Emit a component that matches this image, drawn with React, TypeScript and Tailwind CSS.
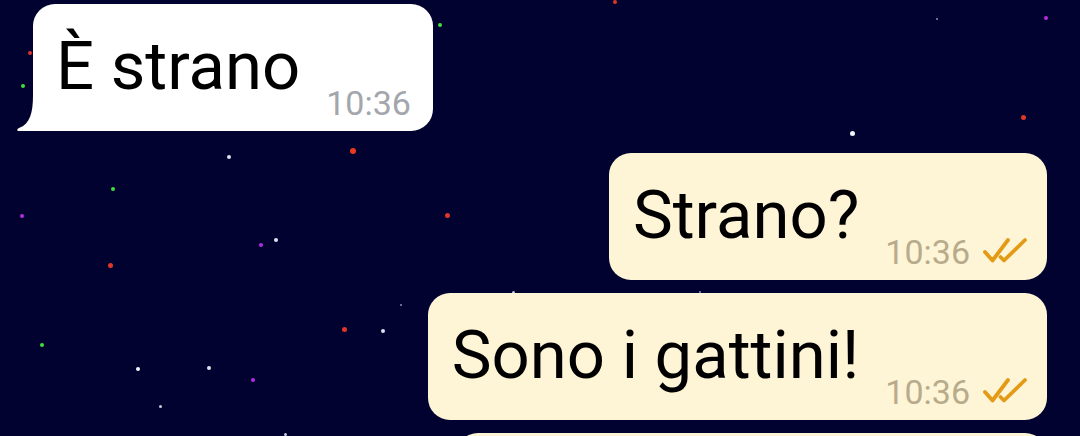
type Star = { x: number; y: number; c: string; s: number }

const stars: Star[] = [
  { x: 30, y: 53, c: "#e0362a", s: 4 },
  { x: 23, y: 86, c: "#3fe03a", s: 4 },
  { x: 440, y: 25, c: "#3fe03a", s: 4 },
  { x: 615, y: 2, c: "#e0362a", s: 4 },
  { x: 1046, y: 18, c: "#b02ee0", s: 4 },
  { x: 937, y: 19, c: "#8a8fb8", s: 2 },
  { x: 1023, y: 117, c: "#e0362a", s: 5 },
  { x: 852, y: 133, c: "#f2f6fa", s: 5 },
  { x: 229, y: 157, c: "#d8e6ee", s: 4 },
  { x: 353, y: 151, c: "#ea3a20", s: 6 },
  { x: 113, y: 189, c: "#3fe03a", s: 4 },
  { x: 22, y: 216, c: "#b02ee0", s: 4 },
  { x: 261, y: 245, c: "#b02ee0", s: 4 },
  { x: 276, y: 240, c: "#d8e2f0", s: 4 },
  { x: 110, y: 265, c: "#e0362a", s: 5 },
  { x: 447, y: 215, c: "#e0362a", s: 5 },
  { x: 344, y: 329, c: "#e0362a", s: 5 },
  { x: 383, y: 331, c: "#d8e2f0", s: 4 },
  { x: 42, y: 345, c: "#3fe03a", s: 4 },
  { x: 138, y: 369, c: "#f2f6fa", s: 4 },
  { x: 209, y: 368, c: "#d8e6ee", s: 4 },
  { x: 253, y: 380, c: "#b02ee0", s: 4 },
  { x: 160, y: 406, c: "#c8cce0", s: 3 },
  { x: 401, y: 305, c: "#8a8fb8", s: 2 },
  { x: 513, y: 292, c: "#c8cce0", s: 3 },
  { x: 700, y: 292, c: "#8a8fb8", s: 2 },
  { x: 285, y: 434, c: "#c8cce0", s: 3 },
]

const Ticks = () => (
  <svg width="46" height="26" viewBox="0 0 46 26" className="mb-[6px] shrink-0">
    <path d="M3 15 L10.5 23.5 L26 3" fill="none" stroke="#e39b16" strokeWidth="3.8" strokeLinecap="round" strokeLinejoin="round" />
    <path d="M18.5 20 L22 23.5 L43 3" fill="none" stroke="#e39b16" strokeWidth="3.8" strokeLinecap="round" strokeLinejoin="round" />
  </svg>
)

type Props = {
  text: string,
  out?: boolean,
}

const Bubble = ({ text, out }: Props) => {
  return (
    <div
      className={
        out
          ? "relative flex h-[127px] shrink-0 self-end rounded-[22px] bg-[#fef5d7] pl-[24px] pr-[19px] pt-[29px] pb-[11px]"
          : "relative flex h-[127px] shrink-0 self-start rounded-[22px] rounded-bl-none bg-white pl-[23px] pr-[22px] pt-[29px] pb-[11px]"
      }
    >
      {!out && (
        <svg width="18" height="36" viewBox="0 0 18 36" className="absolute bottom-0 left-[-17px]">
          <path d="M18 0 L17 0 C17 18 14 29 3 33 Q0 34.5 2 36 L18 36 Z" fill="#ffffff" />
        </svg>
      )}
      <span className="whitespace-nowrap text-[67px] leading-none text-black">{text}</span>
      <div className="ml-[26px] flex items-end gap-[12px] self-end">
        <span className={out ? "text-[34px] leading-none text-[#b8ab8c]" : "text-[34px] leading-none text-[#a3a6ac]"}>10:36</span>
        {out && <Ticks />}
      </div>
    </div>
  )
}

const App = () => {
  return (
    <div className="relative h-[436px] w-[1080px] overflow-hidden bg-[#020230] font-['Roboto',sans-serif]">
      {stars.map((st, i) => (
        <span
          key={i}
          className="absolute rounded-full"
          style={{ left: st.x - st.s / 2, top: st.y - st.s / 2, width: st.s, height: st.s, background: st.c }}
        />
      ))}
      <div className="relative flex flex-col px-[33px] pt-[4px]">
        <Bubble text="È strano" />
        <div className="mt-[22px] flex flex-col gap-[13px]">
          <Bubble text="Strano?" out />
          <Bubble text="Sono i gattini!" out />
          <div className="h-[127px] w-[591px] shrink-0 self-end rounded-[22px] bg-[#fef5d7]" />
        </div>
      </div>
    </div>
  )
}

export default App
